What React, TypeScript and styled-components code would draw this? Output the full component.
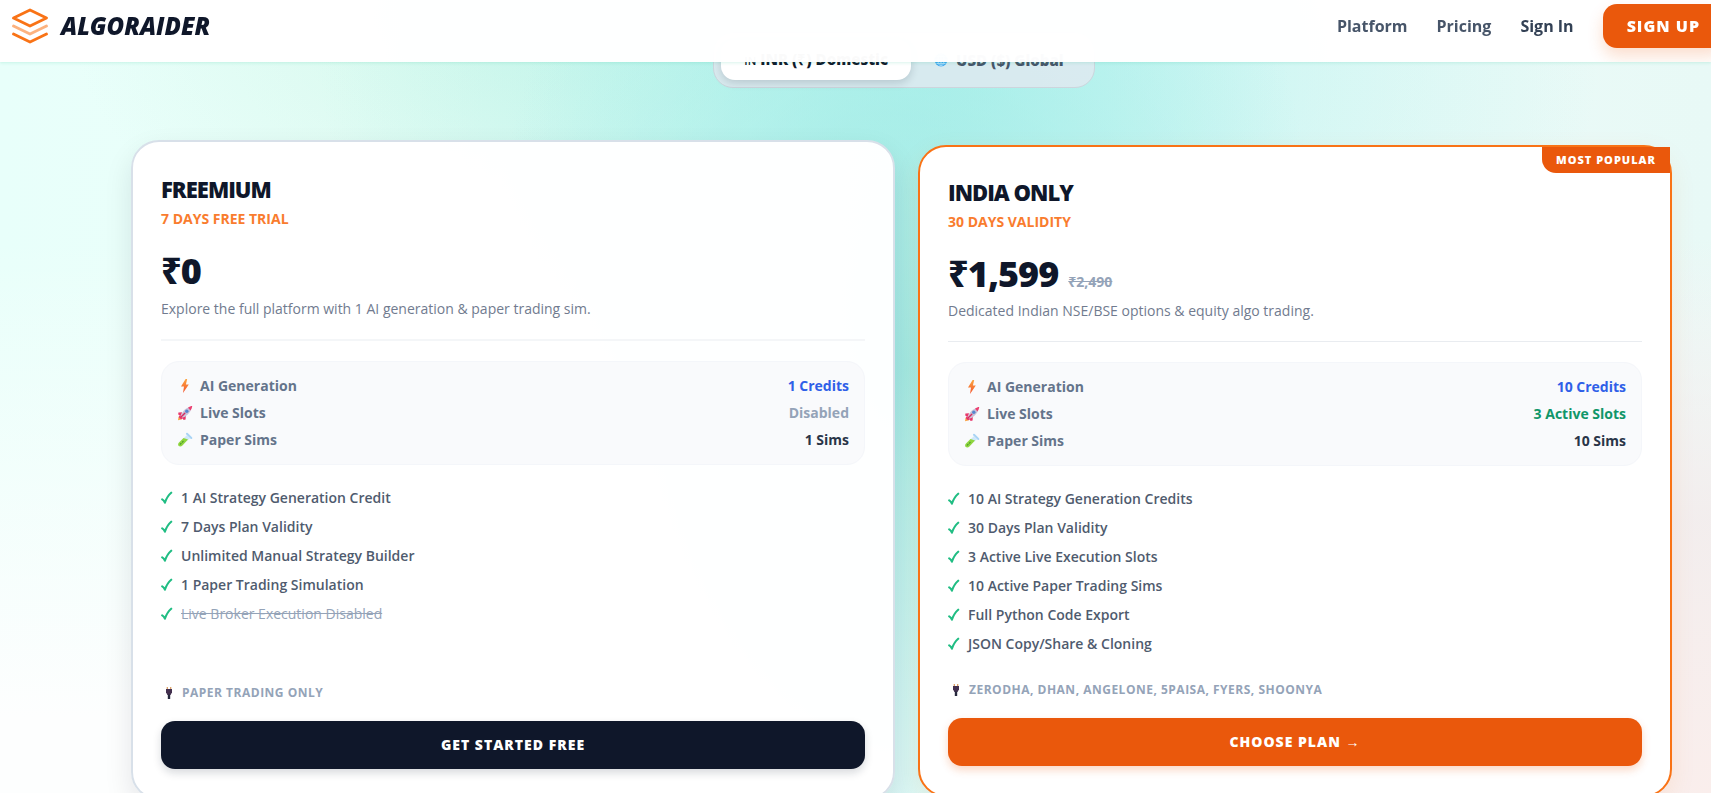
import React from "react";
import styled, { createGlobalStyle, css } from "styled-components";

const GlobalStyle = createGlobalStyle`
  *, *::before, *::after { box-sizing: border-box; }
  html { scrollbar-width: none; }
  body {
    margin: 0;
    overflow-x: hidden;
    background: #effefb;
    color: #0f172a;
    font-family: "Open Sans", "Noto Sans", sans-serif;
  }
`;

const Page = styled.div`
  min-height: 100vh;
  background:
    radial-gradient(ellipse 420px 700px at 53% 46%, rgba(146, 230, 223, 0.8), rgba(156, 236, 230, 0.45) 50%, rgba(160, 240, 235, 0) 100%),
    radial-gradient(ellipse 640px 420px at 56% 8%, rgba(158, 238, 234, 0.65), rgba(165, 240, 236, 0) 100%),
    radial-gradient(ellipse 480px 320px at 32% 0%, rgba(190, 243, 222, 0.6), rgba(200, 245, 230, 0) 100%),
    radial-gradient(ellipse 520px 560px at 100% 100%, #faeeec, rgba(242, 236, 236, 0.9) 50%, rgba(240, 240, 238, 0) 100%),
    linear-gradient(180deg, rgba(253, 255, 254, 0) 30%, #fdfefe 90%),
    linear-gradient(90deg, #e8fffa, #effdfa 50%, #e8f9f6 100%);
`;

const Header = styled.header`
  position: fixed;
  inset: 0 0 auto 0;
  z-index: 10;
  height: 62px;
  padding: 0 0 10px 12px;
  display: flex;
  align-items: center;
  justify-content: space-between;
  overflow: hidden;
  background: rgba(255, 255, 255, 0.98);
  box-shadow: 0 1px 3px rgba(16, 185, 129, 0.16);
`;

const Brand = styled.a`
  display: flex;
  align-items: center;
  gap: 11px;
  color: #0f172a;
  text-decoration: none;
  font-size: 24px;
  line-height: 32px;
  font-weight: 800;
  font-style: italic;
`;

const Nav = styled.nav`
  display: flex;
  align-items: center;
  gap: 29px;
  margin-right: -13px;
`;

const NavLink = styled.a<{ $strong?: boolean }>`
  color: ${(p) => (p.$strong ? "#334155" : "#475569")};
  font-size: 16px;
  line-height: 24px;
  font-weight: 700;
  text-decoration: none;
`;

const SignUp = styled.button`
  height: 44px;
  padding: 0 24px;
  border: 0;
  border-radius: 14px;
  background: #ea580c;
  color: #fff;
  font: 800 16px/24px "Open Sans", sans-serif;
  letter-spacing: 1px;
  box-shadow: 0 8px 16px rgba(234, 88, 12, 0.2);
`;

const Main = styled.main`
  padding: 32px 39px 0 136px;
`;

const Toggle = styled.div`
  width: fit-content;
  margin: 0 auto 57px;
  padding: 7px;
  display: flex;
  border: 1px solid #cdd5dd;
  border-radius: 20px;
  background: rgba(226, 232, 240, 0.8);
`;

const ToggleOption = styled.button<{ $active?: boolean }>`
  height: 40px;
  padding: 0 23px;
  display: flex;
  align-items: center;
  gap: 8px;
  border: 0;
  border-radius: 14px;
  background: ${(p) => (p.$active ? "#fff" : "transparent")};
  color: ${(p) => (p.$active ? "#0f172a" : "#475569")};
  font: 800 15px/20px "Open Sans", sans-serif;
  box-shadow: ${(p) => (p.$active ? "0 3px 8px rgba(15, 23, 42, 0.16)" : "none")};
`;

const FlagCode = styled.span`
  font-size: 11px;
  font-weight: 600;
`;

const Plans = styled.div`
  display: grid;
  grid-template-columns: 1fr 1fr;
  gap: 28px;
`;

const Card = styled.article<{ $variant: Variant }>`
  position: relative;
  display: flex;
  flex-direction: column;
  border-radius: 28px;
  ${(p) =>
    p.$variant === "raised"
      ? css`
          margin: -5px -5px -3px;
          padding: 33px 28px 29px;
          border: 2px solid #d8e0e9;
          background: rgba(255, 255, 255, 0.98);
          box-shadow: 0 12px 28px rgba(15, 23, 42, 0.1);
        `
      : css`
          padding: 31px 28px 29px;
          border: 2px solid #f97316;
          background: #fff;
          box-shadow: 0 8px 24px rgba(249, 115, 22, 0.1);
        `}
`;

const Ribbon = styled.span`
  position: absolute;
  top: 0;
  right: 0;
  padding: 3px 14px;
  border-bottom-left-radius: 14px;
  background: #ea580c;
  color: #fff;
  font-size: 11px;
  line-height: 20px;
  font-weight: 800;
  letter-spacing: 1px;
`;

const PlanName = styled.h3`
  margin: 0;
  font-size: 22px;
  line-height: 28px;
  font-weight: 800;
  letter-spacing: -1px;
`;

const Validity = styled.p`
  margin: 6px 0 22px;
  color: #f97c2e;
  font-size: 14px;
  line-height: 20px;
  font-weight: 700;
`;

const PriceRow = styled.div`
  height: 40px;
  display: flex;
  align-items: baseline;
  gap: 10px;
  line-height: 40px;
`;

const Price = styled.strong`
  font-size: 36px;
  font-weight: 800;
  letter-spacing: -1px;
`;

const OldPrice = styled.s`
  color: #94a3b8;
  font-size: 14px;
  font-weight: 700;
`;

const Summary = styled.p<{ $variant: Variant }>`
  margin: ${(p) => (p.$variant === "raised" ? "8px" : "7px")} 0 20px;
  padding-bottom: 20px;
  border-bottom: ${(p) => (p.$variant === "raised" ? "2px solid #f4f6f8" : "1px solid #e9ecf0")};
  color: #717b8f;
  font-size: 14px;
  line-height: 20px;
`;

const Limits = styled.dl`
  margin: 0 0 23px;
  padding: 14px 15px;
  display: flex;
  flex-direction: column;
  gap: 7px;
  border: 1px solid #f4f6fa;
  border-radius: 18px;
  background: #f9fafc;
  font-size: 14px;
  line-height: 20px;
  font-weight: 700;
`;

const LimitRow = styled.div`
  display: flex;
  justify-content: space-between;
`;

const LimitName = styled.dt`
  display: flex;
  align-items: center;
  gap: 7px;
  color: #64748b;
`;

const LimitValue = styled.dd<{ $tone: Tone }>`
  margin: 0;
  color: ${(p) => tones[p.$tone]};
`;

const Features = styled.ul`
  flex: 1;
  margin: 0 0 28px;
  padding: 0;
  display: flex;
  flex-direction: column;
  gap: 9px;
  list-style: none;
`;

const Feature = styled.li<{ $off?: boolean }>`
  display: flex;
  align-items: center;
  gap: 8px;
  color: ${(p) => (p.$off ? "#94a3b8" : "#4f5b6e")};
  font-size: 14px;
  line-height: 20px;
  font-weight: ${(p) => (p.$off ? 500 : 600)};

  span { text-decoration: ${(p) => (p.$off ? "line-through" : "none")}; }
`;

const Brokers = styled.p`
  margin: 0 0 20px;
  display: flex;
  align-items: center;
  gap: 5px;
  color: #94a3b8;
  font-size: 12px;
  line-height: 16px;
  font-weight: 700;
  letter-spacing: 0.5px;
`;

const Action = styled.button<{ $variant: Variant }>`
  height: 48px;
  border: 0;
  border-radius: 14px;
  background: ${(p) => (p.$variant === "raised" ? "#0f172a" : "#ea580c")};
  color: #fff;
  font: 800 14px/20px "Open Sans", "Noto Sans", sans-serif;
  letter-spacing: 1px;
  box-shadow: ${(p) =>
    p.$variant === "raised" ? "0 4px 8px rgba(15, 23, 42, 0.16)" : "0 4px 8px rgba(234, 88, 12, 0.24)"};
`;

type Variant = "raised" | "popular";
type Tone = "blue" | "green" | "muted" | "dark";

const tones: Record<Tone, string> = {
  blue: "#2f5fe8",
  green: "#109669",
  muted: "#94a3b8",
  dark: "#293548",
};

const Logo = () => (
  <svg width="38" height="38" viewBox="0 0 38 38" fill="none" stroke="#f97316" strokeWidth="2.8" strokeLinecap="round" strokeLinejoin="round" aria-hidden="true">
    <path d="M18 3 34.5 11 18 19 1.500 11Z" />
    <path d="M1.500 19 18 27 34.500 19" opacity="0.55" />
    <path d="M1.500 27 18 35 34.500 27" />
  </svg>
);

const Bolt = () => (
  <svg width="16" height="16" viewBox="0 0 16 16" aria-hidden="true">
    <defs>
      <linearGradient id="bolt" x1="0" y1="0" x2="0" y2="1">
        <stop offset="0" stopColor="#fba640" />
        <stop offset="1" stopColor="#f4512c" />
      </linearGradient>
    </defs>
    <path d="M8.600 1 4 8.600H7L6 15 11.800 6.600H8.900L10.200 1Z" fill="url(#bolt)" />
  </svg>
);

const Rocket = () => (
  <svg width="16" height="16" viewBox="0 0 16 16" aria-hidden="true">
    <path d="M1 15.200 1.700 11.500 5 14.200Z" fill="#f9a03f" />
    <path d="M5 7.200 1.400 7.600 1.200 9.600 4 11Z M8.800 11 8.600 14.400 6.600 14.900 5 12.200Z" fill="#e8386c" />
    <path d="M2.500 10.200 6 13.600 4 14.300 1.700 12.300Z" fill="#e8386c" />
    <path d="M4 10.500C5.500 6 9 2.800 13.300 1.700L14.500 3C13.600 7 10.500 10.500 6 12.500Z" fill="#c9c3d8" />
    <path d="M11 2.700C12.400 1.600 14 1.100 15.200 1.100 15.200 2.400 14.500 4 13.500 5.400Z" fill="#ec3f70" />
    <circle cx="9.800" cy="6.200" r="1.700" fill="#5787cf" />
    <path d="M4 12 7.800 8.200" stroke="#d42c60" strokeWidth="1.400" strokeLinecap="round" />
  </svg>
);

const Tube = () => (
  <svg width="16" height="16" viewBox="0 0 16 16" aria-hidden="true">
    <path d="M9.800 3.200 13 6.400 10 8.700 6.500 6.200Z" fill="#cfe8fa" />
    <path d="M6.500 6 11 7.400 5.400 13.600C4 15 2.300 14.700 1.500 13.700 .8 12.700 1 11.400 2 10.400Z" fill="#8fd63f" />
    <path d="M3.300 12.200 6.600 8.900" stroke="#4f9a2c" strokeWidth="1.200" strokeLinecap="round" strokeDasharray="1 2" />
    <path d="M10 1.800 14.300 6" stroke="#a9d4f5" strokeWidth="2" strokeLinecap="round" />
  </svg>
);

const Plug = () => (
  <svg width="16" height="16" viewBox="0 0 16 16" aria-hidden="true">
    <path d="M6.300 2V5M9.700 2V5" stroke="#d99a5b" strokeWidth="1.200" />
    <path d="M5 4H11V7.200L9.600 10H6.400L5 7.200Z" fill="#43304f" />
    <path d="M8 9.500V14" stroke="#26283d" strokeWidth="2.400" />
  </svg>
);

const Check = () => (
  <svg width="12" height="14" viewBox="0 0 12 14" fill="none" aria-hidden="true">
    <path d="M1.200 8.300C2.500 9 3.300 10.200 3.900 11.700 5.200 7.800 7.500 4 10.200 1.700" stroke="#20bd83" strokeWidth="2.100" strokeLinecap="round" strokeLinejoin="round" />
  </svg>
);

const Globe = () => (
  <svg width="14" height="14" viewBox="0 0 14 14" fill="none" aria-hidden="true">
    <circle cx="7" cy="7" r="6.500" fill="#3fa9f0" />
    <path d="M1 7H13M7 1V13M2.500 3.500H11.500M2.500 10.500H11.500" stroke="#a7daf9" />
    <ellipse cx="7" cy="7" rx="3" ry="6" stroke="#a7daf9" />
  </svg>
);

interface Plan {
  name: string;
  validity: string;
  price: string;
  oldPrice?: string;
  summary: string;
  variant: Variant;
  ribbon?: string;
  limits: { icon: React.ReactNode; name: string; value: string; tone: Tone }[];
  features: { text: string; off?: boolean }[];
  brokers: string;
  action: string;
}

const plans: Plan[] = [
  {
    name: "FREEMIUM",
    validity: "7 DAYS FREE TRIAL",
    price: "₹0",
    summary: "Explore the full platform with 1 AI generation & paper trading sim.",
    variant: "raised",
    limits: [
      { icon: <Bolt />, name: "AI Generation", value: "1 Credits", tone: "blue" },
      { icon: <Rocket />, name: "Live Slots", value: "Disabled", tone: "muted" },
      { icon: <Tube />, name: "Paper Sims", value: "1 Sims", tone: "dark" },
    ],
    features: [
      { text: "1 AI Strategy Generation Credit" },
      { text: "7 Days Plan Validity" },
      { text: "Unlimited Manual Strategy Builder" },
      { text: "1 Paper Trading Simulation" },
      { text: "Live Broker Execution Disabled", off: true },
    ],
    brokers: "PAPER TRADING ONLY",
    action: "GET STARTED FREE",
  },
  {
    name: "INDIA ONLY",
    validity: "30 DAYS VALIDITY",
    price: "₹1,599",
    oldPrice: "₹2,490",
    summary: "Dedicated Indian NSE/BSE options & equity algo trading.",
    variant: "popular",
    ribbon: "MOST POPULAR",
    limits: [
      { icon: <Bolt />, name: "AI Generation", value: "10 Credits", tone: "blue" },
      { icon: <Rocket />, name: "Live Slots", value: "3 Active Slots", tone: "green" },
      { icon: <Tube />, name: "Paper Sims", value: "10 Sims", tone: "dark" },
    ],
    features: [
      { text: "10 AI Strategy Generation Credits" },
      { text: "30 Days Plan Validity" },
      { text: "3 Active Live Execution Slots" },
      { text: "10 Active Paper Trading Sims" },
      { text: "Full Python Code Export" },
      { text: "JSON Copy/Share & Cloning" },
    ],
    brokers: "ZERODHA, DHAN, ANGELONE, 5PAISA, FYERS, SHOONYA",
    action: "CHOOSE PLAN →",
  },
];

const PlanCard = ({ plan }: { plan: Plan }) => (
  <Card $variant={plan.variant}>
    {plan.ribbon && <Ribbon>{plan.ribbon}</Ribbon>}
    <PlanName>{plan.name}</PlanName>
    <Validity>{plan.validity}</Validity>
    <PriceRow>
      <Price>{plan.price}</Price>
      {plan.oldPrice && <OldPrice>{plan.oldPrice}</OldPrice>}
    </PriceRow>
    <Summary $variant={plan.variant}>{plan.summary}</Summary>
    <Limits>
      {plan.limits.map((l) => (
        <LimitRow key={l.name}>
          <LimitName>{l.icon}{l.name}</LimitName>
          <LimitValue $tone={l.tone}>{l.value}</LimitValue>
        </LimitRow>
      ))}
    </Limits>
    <Features>
      {plan.features.map((f) => (
        <Feature key={f.text} $off={f.off}><Check /><span>{f.text}</span></Feature>
      ))}
    </Features>
    <Brokers><Plug />{plan.brokers}</Brokers>
    <Action type="button" $variant={plan.variant}>{plan.action}</Action>
  </Card>
);

export default function App() {
  return (
    <Page>
      <GlobalStyle />
      <Header>
        <Brand href="#"><Logo />ALGORAIDER</Brand>
        <Nav>
          <NavLink href="#platform">Platform</NavLink>
          <NavLink href="#pricing">Pricing</NavLink>
          <NavLink href="#signin" $strong>Sign In</NavLink>
          <SignUp type="button">SIGN UP</SignUp>
        </Nav>
      </Header>
      <Main>
        <Toggle>
          <ToggleOption type="button" $active><span><FlagCode>IN</FlagCode> INR (₹) Domestic</span></ToggleOption>
          <ToggleOption type="button"><Globe />USD ($) Global</ToggleOption>
        </Toggle>
        <Plans>
          {plans.map((p) => <PlanCard key={p.name} plan={p} />)}
        </Plans>
      </Main>
    </Page>
  );
}
